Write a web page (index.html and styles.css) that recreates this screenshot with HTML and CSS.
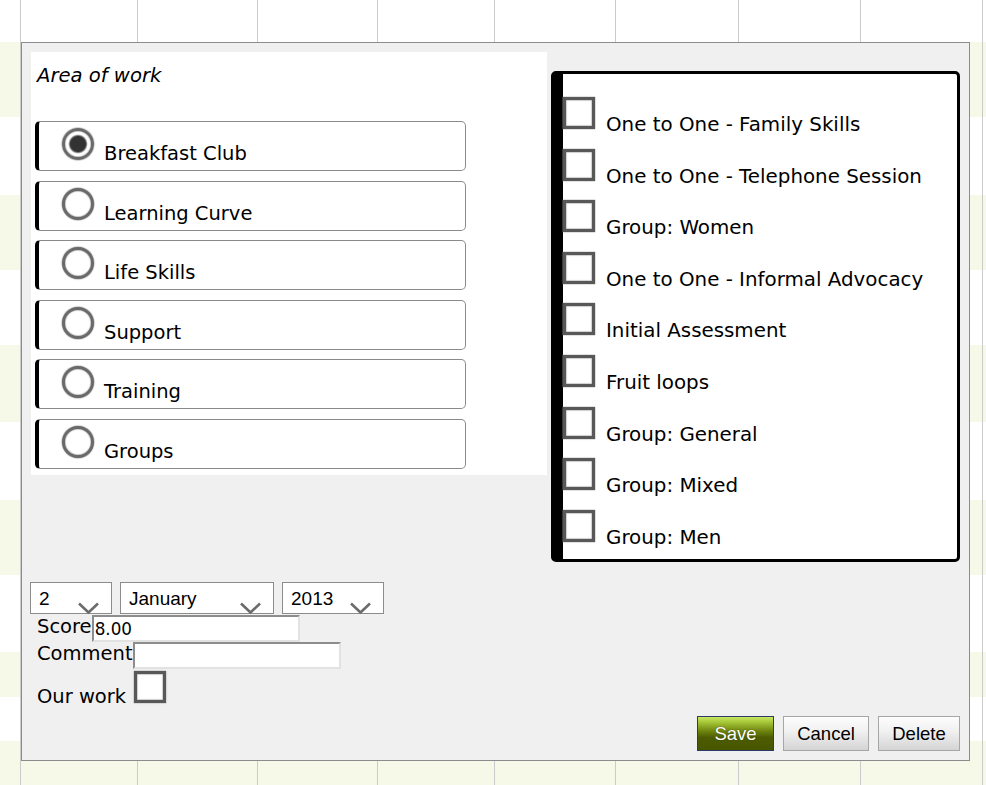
FILE: index.html
```html
<!DOCTYPE html>
<html lang="en">
<head>
<meta charset="utf-8">
<title>Area of work</title>
<link rel="stylesheet" href="styles.css">
</head>
<body>
<div class="cal">
  <div class="cal-row r42"></div>
  <div class="cal-row alt r75"></div>
  <div class="cal-row r78"></div>
  <div class="cal-row alt r75"></div>
  <div class="cal-row r75"></div>
  <div class="cal-row alt r77"></div>
  <div class="cal-row r78"></div>
  <div class="cal-row alt r75"></div>
  <div class="cal-row r77"></div>
  <div class="cal-row alt r45"></div>
  <div class="cal-row r44"></div>
  <div class="cal-row alt r44"></div>
</div>

<div class="dialog">
  <div class="top">
    <div class="area">
      <div class="area-title">Area of work</div>
      <div class="items">
        <div class="item"><span class="radio checked"></span><span class="item-label">Breakfast Club</span></div>
        <div class="item"><span class="radio"></span><span class="item-label">Learning Curve</span></div>
        <div class="item"><span class="radio"></span><span class="item-label">Life Skills</span></div>
        <div class="item"><span class="radio"></span><span class="item-label">Support</span></div>
        <div class="item"><span class="radio"></span><span class="item-label">Training</span></div>
        <div class="item"><span class="radio"></span><span class="item-label">Groups</span></div>
      </div>
    </div>
    <div class="types">
      <div class="type"><span class="cb"></span><span class="type-label">One to One - Family Skills</span></div>
      <div class="type"><span class="cb"></span><span class="type-label">One to One - Telephone Session</span></div>
      <div class="type"><span class="cb"></span><span class="type-label">Group: Women</span></div>
      <div class="type"><span class="cb"></span><span class="type-label">One to One - Informal Advocacy</span></div>
      <div class="type"><span class="cb"></span><span class="type-label">Initial Assessment</span></div>
      <div class="type"><span class="cb"></span><span class="type-label">Fruit loops</span></div>
      <div class="type"><span class="cb"></span><span class="type-label">Group: General</span></div>
      <div class="type"><span class="cb"></span><span class="type-label">Group: Mixed</span></div>
      <div class="type"><span class="cb"></span><span class="type-label">Group: Men</span></div>
    </div>
  </div>

  <div class="date-row">
    <div class="sel sel-day"><span class="sel-text">2</span><svg class="chev" width="23" height="12" viewBox="0 0 23 12"><polyline points="2,1.5 11.5,10.5 21,1.5" fill="none" stroke="#6b6b6b" stroke-width="2.6"/></svg></div>
    <div class="sel sel-month"><span class="sel-text">January</span><svg class="chev" width="23" height="12" viewBox="0 0 23 12"><polyline points="2,1.5 11.5,10.5 21,1.5" fill="none" stroke="#6b6b6b" stroke-width="2.6"/></svg></div>
    <div class="sel sel-year"><span class="sel-text">2013</span><svg class="chev" width="23" height="12" viewBox="0 0 23 12"><polyline points="2,1.5 11.5,10.5 21,1.5" fill="none" stroke="#6b6b6b" stroke-width="2.6"/></svg></div>
  </div>

  <div class="field score"><span class="lbl">Score</span><input class="txt" type="text" value="8.00"></div>
  <div class="field"><span class="lbl">Comment</span><input class="txt" type="text" value=""></div>
  <div class="ourwork">Our work <span class="cb cb-inline"></span></div>

  <div class="buttons">
    <button class="btn save">Save</button>
    <button class="btn plain btn-cancel">Cancel</button>
    <button class="btn plain btn-delete">Delete</button>
  </div>
</div>
</body>
</html>
```
FILE: styles.css
```css
html, body {
  margin: 0;
  padding: 0;
}
body {
  width: 986px;
  height: 785px;
  overflow: hidden;
  background: #fff;
  font-family: "DejaVu Sans", Verdana, sans-serif;
  color: #000;
}

/* calendar background */
.cal-row {
  background-color: #fff;
  background-image:
    linear-gradient(#cbcbcb, #cbcbcb),
    linear-gradient(#cbcbcb, #cbcbcb),
    linear-gradient(#cbcbcb, #cbcbcb),
    linear-gradient(#cbcbcb, #cbcbcb),
    linear-gradient(#cbcbcb, #cbcbcb),
    linear-gradient(#cbcbcb, #cbcbcb),
    linear-gradient(#cbcbcb, #cbcbcb),
    linear-gradient(#cbcbcb, #cbcbcb),
    linear-gradient(#cbcbcb, #cbcbcb);
  background-size: 1px 100%;
  background-repeat: no-repeat;
  background-position: 20px 0, 137px 0, 257px 0, 377px 0, 494px 0, 615px 0, 738px 0, 860px 0, 982px 0;
}
.cal-row.alt { background-color: #f7f9e8; }
.r42 { height: 42px; }
.r44 { height: 44px; }
.r45 { height: 45px; }
.r75 { height: 75px; }
.r77 { height: 77px; }
.r78 { height: 78px; }

/* dialog */
.dialog {
  position: absolute;
  left: 21px;
  top: 42px;
  width: 949px;
  height: 719px;
  box-sizing: border-box;
  border: 1px solid #8c8c8c;
  background: #f0f0f0;
  padding: 9px;
}

.top {
  display: flex;
  align-items: flex-start;
}

.area {
  width: 516px;
  box-sizing: border-box;
  background: #fff;
  padding: 12px 0 6px 4px;
}
.area-title {
  font-style: italic;
  font-size: 19.6px;
  line-height: 23px;
  margin-left: 2px;
  margin-bottom: 34px;
}
.items {
  display: flex;
  flex-direction: column;
  gap: 9.6px;
}
.item {
  width: 431px;
  height: 50px;
  box-sizing: border-box;
  border: 1px solid #8a8a8a;
  border-left: 4px solid #000;
  border-radius: 5px;
  display: flex;
  align-items: flex-start;
}
.radio {
  width: 32px;
  height: 32px;
  box-sizing: border-box;
  margin: 6px 0 0 23px;
  border-radius: 50%;
  border: 3px solid #6a6a6a;
  background: #fff;
  box-shadow: 0 0 1px 0.5px #a8a8a8, inset 0 0 1px 0.5px #b0b0b0;
  flex: none;
}
.radio.checked {
  background: radial-gradient(circle at center, #333 0, #333 7.5px, #808080 8.5px, #fff 9.8px);
}
.item-label {
  margin: 20px 0 0 10px;
  font-size: 19.5px;
  line-height: 23px;
}

.types {
  width: 409px;
  height: 491px;
  box-sizing: border-box;
  margin: 19px 0 0 4px;
  border: 3px solid #000;
  border-left-width: 12px;
  border-radius: 5px;
  background: #fff;
  padding-top: 23px;
}
.type {
  height: 51.6px;
  display: flex;
  align-items: flex-start;
}
.cb {
  width: 32px;
  height: 32px;
  box-sizing: border-box;
  border: 3px solid #585858;
  background: #fff;
  box-shadow: inset 0 0 1px 0.5px #a8a8a8, 0 0 1px 0.3px #a0a0a0;
  flex: none;
}
.type-label {
  margin: 16px 0 0 11px;
  font-size: 19.85px;
  line-height: 23px;
  white-space: nowrap;
}

/* date selects */
.date-row {
  display: flex;
  gap: 8px;
  margin: 20px 0 0 -1px;
}
.sel {
  height: 32px;
  box-sizing: border-box;
  border: 1px solid #8c8c8c;
  background: #fff;
  display: flex;
  align-items: flex-start;
  padding-left: 8px;
  font-family: "Liberation Sans", Arial, sans-serif;
  font-size: 19px;
  line-height: 22px;
}
.sel-day { width: 82px; }
.sel-month { width: 154px; }
.sel-year { width: 102px; }
.sel-text { margin-top: 4.5px; }
.chev {
  margin-left: auto;
  margin-right: 11px;
  margin-bottom: -1px;
  align-self: flex-end;
  flex: none;
}

/* fields */
.field {
  display: flex;
  align-items: flex-start;
  padding-left: 6px;
  height: 27px;
}
.field.score { margin-top: 1px; }
.lbl {
  font-size: 19.5px;
  line-height: 23px;
}
.txt {
  width: 208px;
  height: 27px;
  box-sizing: border-box;
  margin: 0;
  padding: 0 1px;
  border-style: solid;
  border-width: 2px;
  border-color: #8d8d8d #e2e2e2 #e2e2e2 #8d8d8d;
  background: #fff;
  font-family: "DejaVu Sans", Verdana, sans-serif;
  font-size: 16.8px;
  color: #000;
  outline: none;
}

.ourwork {
  margin-top: 2px;
  padding-left: 6px;
  font-size: 19.5px;
  line-height: 23px;
}
.cb-inline {
  display: inline-block;
  vertical-align: baseline;
  margin-left: 2px;
}

/* buttons */
.buttons {
  display: flex;
  justify-content: flex-end;
  gap: 9px;
  margin-top: 8px;
}
.btn {
  height: 35px;
  box-sizing: border-box;
  margin: 0;
  padding: 0;
  font-family: "Liberation Sans", Arial, sans-serif;
  font-size: 18.5px;
  cursor: pointer;
}
.save {
  width: 77px;
  color: #fff;
  border: 1px solid #2d3a66;
  background: linear-gradient(to bottom, #c8e860 0%, #a8c83a 15%, #70860f 42%, #4d5c00 62%, #485500 100%);
  text-shadow: 0 0 1px #2a3300;
}
.plain {
  color: #000;
  border: 1px solid #a6a6a6;
  background: linear-gradient(to bottom, #fdfdfd 0%, #f0f0f0 45%, #d4d4d4 100%);
}
.btn-cancel { width: 86px; }
.btn-delete { width: 82px; }
```
